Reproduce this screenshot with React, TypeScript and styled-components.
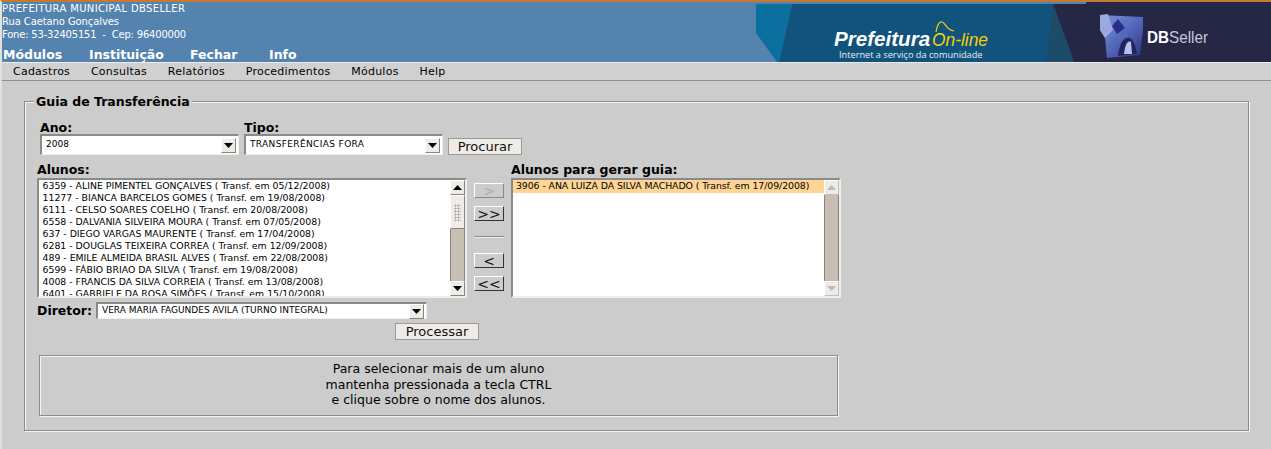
import React from "react";
import styled, { createGlobalStyle } from "styled-components";

const GlobalStyle = createGlobalStyle`
  html, body {
    margin: 0;
    padding: 0;
    background: #cccccc;
    font-family: "DejaVu Sans", sans-serif;
    color: #000;
  }
`;

const Page = styled.div`
  width: 1271px;
  height: 449px;
  overflow: hidden;
  box-sizing: border-box;
  border-top: 2px solid #c47a30;
  border-left: 2px solid #e4e0da;
  background: #cccccc;
`;

const Header = styled.header`
  height: 60px;
  background: #5583b0;
  display: flex;
  justify-content: space-between;
`;

const HeaderInfo = styled.div`
  color: #fff;
  font-size: 10px;
  line-height: 13px;
`;

const HeaderLine = styled.div<{ $tracking: number }>`
  letter-spacing: ${(p) => p.$tracking}px;
  white-space: nowrap;
`;

const TopNav = styled.nav`
  display: flex;
  margin-top: 6px;
  padding-left: 1px;
  color: #fff;
  font-size: 12.5px;
  font-weight: bold;
  line-height: 15px;
`;

const TopNavItem = styled.span<{ $width: number }>`
  width: ${(p) => p.$width}px;
`;

const Banner = styled.svg`
  display: block;
  width: 515px;
  height: 60px;
`;

const MenuBar = styled.div`
  box-sizing: border-box;
  height: 19px;
  background: #d0d0d0;
  border-top: 1px solid #ececec;
  border-bottom: 1px solid #909090;
  display: flex;
  gap: 20.8px;
  padding-left: 11px;
  font-size: 11px;
  letter-spacing: 0.24px;
  line-height: 17px;
`;

const MenuItem = styled.span``;

const Content = styled.main`
  padding: 13px 22px 0 22px;
`;

const Group = styled.fieldset`
  margin: 0;
  padding: 12px 12px 13px 12px;
  height: 337px;
  box-sizing: border-box;
  border: 1px solid #8c8c88;
  box-shadow: inset 1px 1px 0 #f4f4f4, 1px 1px 0 #f4f4f4;
  min-width: 0;
`;

const GroupTitle = styled.legend`
  font-size: 12.5px;
  font-weight: bold;
  padding: 0 2px;
  margin-left: -3px;
  line-height: 15px;
  background: #cccccc;
`;

const Label = styled.div`
  font-size: 12.5px;
  font-weight: bold;
  line-height: 13px;
  white-space: nowrap;
`;

const FilterRow = styled.div`
  display: flex;
  align-items: flex-end;
  gap: 5px;
  margin-left: 3px;
`;

const Field = styled.div`
  display: flex;
  flex-direction: column;
`;

const Select = styled.div<{ $width: number; $height?: number; $tracking?: number }>`
  box-sizing: border-box;
  width: ${(p) => p.$width}px;
  height: ${(p) => p.$height ?? 21}px;
  background: #fff;
  border-top: 2px solid #8a8a86;
  border-left: 2px solid #8a8a86;
  border-right: 1px solid #eee;
  border-bottom: 1px solid #eee;
  display: flex;
  align-items: center;
  justify-content: space-between;
  padding: 0 2px 2px 4px;
  font-size: 9px;
  letter-spacing: ${(p) => p.$tracking ?? 0}px;
  white-space: nowrap;
`;

const SelectArrow = styled.span`
  box-sizing: border-box;
  width: 15px;
  height: 15px;
  background: #efebe6;
  border: 1px solid;
  border-color: #fff #8a8378 #8a8378 #fff;
  display: flex;
  align-items: center;
  justify-content: center;
  flex: none;
  margin-top: 2px;
`;

const Button = styled.button<{ $width: number }>`
  box-sizing: border-box;
  width: ${(p) => p.$width}px;
  height: 17px;
  padding: 1px 0 0;
  background: #efebe6;
  border: 1px solid #9c9a94;
  font-family: "DejaVu Sans", sans-serif;
  font-size: 13px;
  line-height: 14px;
  color: #111;
`;

const ListsRow = styled.div`
  display: flex;
  margin-top: 8px;
`;

const ListColumn = styled.div`
  display: flex;
  flex-direction: column;
`;

const ListBox = styled.div<{ $width: number }>`
  box-sizing: border-box;
  width: ${(p) => p.$width}px;
  height: 120px;
  margin-top: 2px;
  background: #fff;
  border-top: 2px solid #8a8a86;
  border-left: 2px solid #8a8a86;
  border-right: 2px solid #eee;
  border-bottom: 2px solid #eee;
  display: flex;
  overflow: hidden;
`;

const Options = styled.div`
  flex: 1;
  min-width: 0;
  overflow: hidden;
`;

const Option = styled.div<{ $selected?: boolean }>`
  height: ${(p) => (p.$selected ? 13 : 12)}px;
  line-height: 12px;
  padding-left: ${(p) => (p.$selected ? 3 : 3.5)}px;
  font-size: 9.36px;
  letter-spacing: ${(p) => (p.$selected ? -0.07 : 0)}px;
  white-space: nowrap;
  background: ${(p) => (p.$selected ? "#ffd494" : "transparent")};
`;

const ScrollBar = styled.div`
  width: 15px;
  flex: none;
  display: flex;
  flex-direction: column;
`;

const ScrollButton = styled.div<{ $disabled?: boolean }>`
  box-sizing: border-box;
  height: 15px;
  flex: none;
  background: #efebe6;
  border: 1px solid;
  border-color: ${(p) => (p.$disabled ? "#fff #c8bfb4 #c8bfb4 #fff" : "#fff #8a8378 #8a8378 #fff")};
  display: flex;
  align-items: center;
  justify-content: center;
`;

const ScrollTrack = styled.div`
  flex: 1;
  display: flex;
  flex-direction: column;
  background: #c8bfb4;
  border-left: 1px solid #8a8378;
  border-right: 1px solid #8a8378;
`;

const ScrollThumb = styled.div`
  box-sizing: border-box;
  height: 34px;
  margin: 0 -1px;
  padding: 8px 3px 7px;
  background: #efebe6;
  border: 1px solid;
  border-color: #fff #8a8378 #8a8378 #fff;
`;

const ScrollGrip = styled.div`
  height: 100%;
  background-image: radial-gradient(#a8a39a 45%, transparent 50%);
  background-size: 3px 3px;
`;

const MoveColumn = styled.div`
  width: 44px;
  display: flex;
  flex-direction: column;
  align-items: center;
  padding-top: 20px;
`;

const MoveButton = styled.button<{ $disabled?: boolean }>`
  box-sizing: border-box;
  width: 30px;
  height: 15px;
  padding: 2px 0 0;
  margin-bottom: 8px;
  background: #cccccc;
  border: 1px solid;
  border-color: ${(p) => (p.$disabled ? "#fff #8a8a86 #8a8a86 #fff" : "#fff #333 #333 #fff")};
  font-family: "DejaVu Sans", sans-serif;
  font-size: 14px;
  line-height: 11px;
  color: ${(p) => (p.$disabled ? "#aaa" : "#111")};
`;

const MoveDivider = styled.hr`
  width: 30px;
  margin: 7px 0 15px;
  border: 0;
  border-top: 1px solid #8a8a86;
  border-bottom: 1px solid #eee;
`;

const DirectorRow = styled.div`
  display: flex;
  align-items: center;
  gap: 4px;
  margin-top: 3px;
`;

const ProcessRow = styled.div`
  display: flex;
  margin: 4px 0 0 358px;
`;

const Notice = styled.div`
  box-sizing: border-box;
  width: 799px;
  height: 61px;
  margin: 15px 0 0 2px;
  border: 1px solid #8c8c88;
  box-shadow: inset 1px 1px 0 #f4f4f4, 1px 1px 0 #f4f4f4;
  text-align: center;
  font-size: 12.5px;
  line-height: 15.5px;
  padding-top: 5px;
`;

const Arrow = ({ down, color = "#000" }: { down?: boolean; color?: string }) => (
  <svg width="9" height="5" viewBox="0 0 9 5">
    <path d={down ? "M0 0H9L4.5 5Z" : "M0 5H9L4.5 0Z"} fill={color} />
  </svg>
);

const students = [
  "6359 - ALINE PIMENTEL GONÇALVES ( Transf. em 05/12/2008)",
  "11277 - BIANCA BARCELOS GOMES ( Transf. em 19/08/2008)",
  "6111 - CELSO SOARES COELHO ( Transf. em 20/08/2008)",
  "6558 - DALVANIA SILVEIRA MOURA ( Transf. em 07/05/2008)",
  "637 - DIEGO VARGAS MAURENTE ( Transf. em 17/04/2008)",
  "6281 - DOUGLAS TEIXEIRA CORREA ( Transf. em 12/09/2008)",
  "489 - EMILE ALMEIDA BRASIL ALVES ( Transf. em 22/08/2008)",
  "6599 - FÁBIO BRIAO DA SILVA ( Transf. em 19/08/2008)",
  "4008 - FRANCIS DA SILVA CORREIA ( Transf. em 13/08/2008)",
  "6401 - GABRIELE DA ROSA SIMÕES ( Transf. em 15/10/2008)",
];

const App = () => (
  <Page>
    <GlobalStyle />
    <Header>
      <HeaderInfo>
        <HeaderLine $tracking={0.35}>PREFEITURA MUNICIPAL DBSELLER</HeaderLine>
        <HeaderLine $tracking={-0.1}>Rua Caetano Gonçalves</HeaderLine>
        <HeaderLine $tracking={-0.2}>Fone: 53-32405151 &nbsp;-&nbsp; Cep: 96400000</HeaderLine>
        <TopNav>
          <TopNavItem $width={86}>Módulos</TopNavItem>
          <TopNavItem $width={101}>Instituição</TopNavItem>
          <TopNavItem $width={79}>Fechar</TopNavItem>
          <TopNavItem $width={40}>Info</TopNavItem>
        </TopNav>
      </HeaderInfo>
      <Banner viewBox="0 0 515 60">
        <defs>
          <linearGradient id="cube" x1="0" y1="0" x2="1" y2="1">
            <stop offset="0" stopColor="#7f93d6" />
            <stop offset="0.55" stopColor="#5064b8" />
            <stop offset="1" stopColor="#2c3478" />
          </linearGradient>
          <filter id="soft">
            <feGaussianBlur stdDeviation="0.7" />
          </filter>
        </defs>
        <rect x="0" y="0" width="515" height="60" fill="#5583b0" />
        <rect x="330" y="0" width="185" height="60" fill="#262645" />
        <polygon points="0,2 36,2 23,60 21,60 0,31" fill="#0b6f9f" />
        <polygon points="36,2 297,2 318,60 23,60" fill="#12537d" />
        <polygon points="297,2 318,60 290,60" fill="#1c4c6a" />
        <polygon points="297,2 330,2 330,60 318,60" fill="#262645" />
        <text x="78" y="43.5" fill="#fff" fontFamily="Liberation Sans" fontWeight="bold" fontStyle="italic" fontSize="20.6">Prefeitura</text>
        <text x="176" y="43.5" fill="#f1d20a" fontFamily="Liberation Sans" fontStyle="italic" fontSize="18" textLength="56" lengthAdjust="spacingAndGlyphs">On-line</text>
        <text x="83" y="56" fill="#e8eef4" fontFamily="Open Sans" fontSize="9.2">Internet a serviço da comunidade</text>
        <path d="M180 30C181 24 183 19 186 20C190 21 190 28 198 29" fill="none" stroke="#f1d20a" strokeWidth="1.2" />
        <g filter="url(#soft)">
          <path d="M344 13L387 15L387 28L384 53L351 56L349 36L344 28Z" fill="url(#cube)" />
          <path d="M344 13L352 12L357 28L349 36L344 28Z" fill="#9aa9e2" />
          <path d="M356 24L362 17L369 26L361 32Z" fill="#2b2f8a" />
          <path d="M362 54C363 42 368 34 374 36C378 38 380 46 381 52Z" fill="#20285f" />
          <path d="M368 52C369 44 371 38 375 40L376 52Z" fill="#b8c2ec" />
        </g>
        <text x="391" y="41" fontFamily="Liberation Sans" fontSize="16.5" textLength="61" lengthAdjust="spacingAndGlyphs">
          <tspan fill="#fff" fontWeight="bold">DB</tspan>
          <tspan fill="#c8c8d8">Seller</tspan>
        </text>
      </Banner>
    </Header>
    <MenuBar>
      {["Cadastros", "Consultas", "Relatórios", "Procedimentos", "Módulos", "Help"].map((m) => (
        <MenuItem key={m}>{m}</MenuItem>
      ))}
    </MenuBar>
    <Content>
      <Group>
        <GroupTitle>Guia de Transferência</GroupTitle>
        <FilterRow>
          <Field>
            <Label>Ano:</Label>
            <Select $width={199}>
              2008
              <SelectArrow><Arrow down /></SelectArrow>
            </Select>
          </Field>
          <Field>
            <Label>Tipo:</Label>
            <Select $width={199} $tracking={0.36}>
              TRANSFERÊNCIAS FORA
              <SelectArrow><Arrow down /></SelectArrow>
            </Select>
          </Field>
          <Button $width={74}>Procurar</Button>
        </FilterRow>
        <ListsRow>
          <ListColumn>
            <Label>Alunos:</Label>
            <ListBox $width={430}>
              <Options>
                {students.map((s) => (
                  <Option key={s}>{s}</Option>
                ))}
              </Options>
              <ScrollBar>
                <ScrollButton><Arrow /></ScrollButton>
                <ScrollTrack>
                  <ScrollThumb><ScrollGrip /></ScrollThumb>
                </ScrollTrack>
                <ScrollButton><Arrow down /></ScrollButton>
              </ScrollBar>
            </ListBox>
          </ListColumn>
          <MoveColumn>
            <MoveButton $disabled>&gt;</MoveButton>
            <MoveButton>&gt;&gt;</MoveButton>
            <MoveDivider />
            <MoveButton>&lt;</MoveButton>
            <MoveButton>&lt;&lt;</MoveButton>
          </MoveColumn>
          <ListColumn>
            <Label>Alunos para gerar guia:</Label>
            <ListBox $width={330}>
              <Options>
                <Option $selected>3906 - ANA LUIZA DA SILVA MACHADO ( Transf. em 17/09/2008)</Option>
              </Options>
              <ScrollBar>
                <ScrollButton $disabled><Arrow color="#bbb" /></ScrollButton>
                <ScrollTrack />
                <ScrollButton $disabled><Arrow down color="#bbb" /></ScrollButton>
              </ScrollBar>
            </ListBox>
          </ListColumn>
        </ListsRow>
        <DirectorRow>
          <Label>Diretor:</Label>
          <Select $width={331} $height={17}>
            VERA MARIA FAGUNDES AVILA (TURNO INTEGRAL)
            <SelectArrow><Arrow down /></SelectArrow>
          </Select>
        </DirectorRow>
        <ProcessRow>
          <Button $width={84}>Processar</Button>
        </ProcessRow>
        <Notice>
          Para selecionar mais de um aluno
          <br />
          mantenha pressionada a tecla CTRL
          <br />
          e clique sobre o nome dos alunos.
        </Notice>
      </Group>
    </Content>
  </Page>
);

export default App;
